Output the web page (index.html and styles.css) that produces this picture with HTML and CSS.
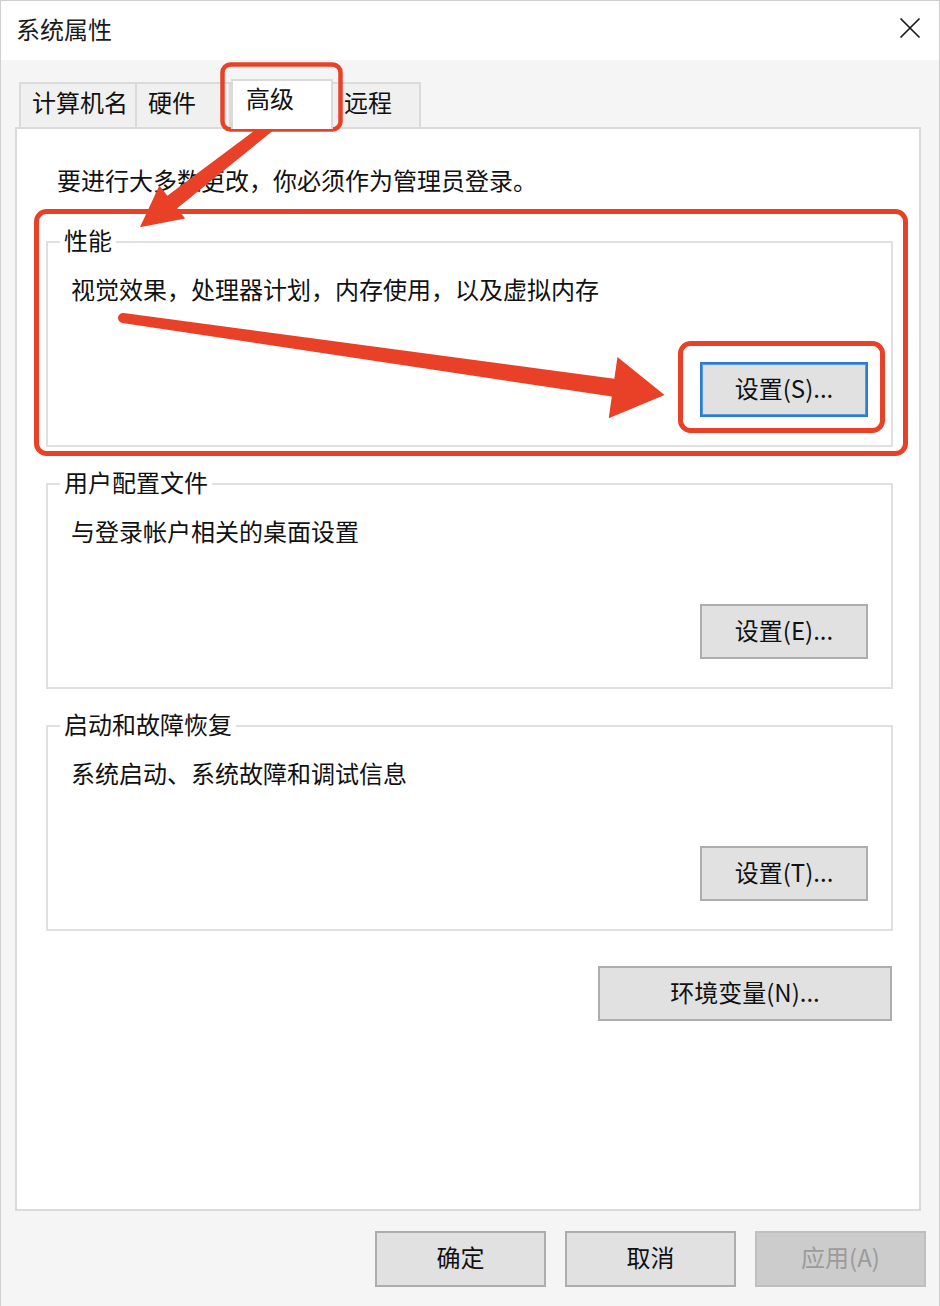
FILE: index.html
```html
<!DOCTYPE html>
<html lang="zh-CN">
<head>
<meta charset="utf-8">
<title>系统属性</title>
<link rel="stylesheet" href="styles.css">
</head>
<body>
<div class="window">
  <div class="titlebar">
    <span class="title">系统属性</span>
    <svg class="close" width="22" height="22" viewBox="0 0 22 22">
      <path d="M1.5 1.5 L20.5 20.5 M20.5 1.5 L1.5 20.5" stroke="#1a1a1a" stroke-width="1.7" fill="none"/>
    </svg>
  </div>
  <div class="tabs">
    <div class="tab tab-name">计算机名</div>
    <div class="tab tab-hw">硬件</div>
    <div class="tab tab-adv selected">高级</div>
    <div class="tab tab-remote">远程</div>
  </div>
  <div class="panel">
    <div class="intro">要进行大多数更改，你必须作为管理员登录。</div>
    <div class="group group-first">
      <span class="legend">性能</span>
      <div class="desc">视觉效果，处理器计划，内存使用，以及虚拟内存</div>
      <div class="group-actions">
        <div class="btn focused">设置(S)...</div>
      </div>
    </div>
    <div class="group">
      <span class="legend">用户配置文件</span>
      <div class="desc">与登录帐户相关的桌面设置</div>
      <div class="group-actions">
        <div class="btn">设置(E)...</div>
      </div>
    </div>
    <div class="group">
      <span class="legend">启动和故障恢复</span>
      <div class="desc">系统启动、系统故障和调试信息</div>
      <div class="group-actions">
        <div class="btn">设置(T)...</div>
      </div>
    </div>
    <div class="btn btn-env">环境变量(N)...</div>
  </div>
  <div class="footer">
    <div class="btn btn-foot">确定</div>
    <div class="btn btn-foot">取消</div>
    <div class="btn btn-foot disabled">应用(A)</div>
  </div>
</div>
<svg class="annotations" width="940" height="1306" viewBox="0 0 940 1306">
  <g fill="none" stroke="#e94128">
    <rect x="222.5" y="64.5" width="118" height="65" rx="8" stroke-width="4.5"/>
    <rect x="36.5" y="211.5" width="869" height="242" rx="10" stroke-width="5"/>
    <rect x="680.5" y="343.5" width="202" height="87" rx="10" stroke-width="5"/>
  </g>
  <g fill="#e94128">
    <path transform="translate(293 108) rotate(142.1)" d="M0,-5 L153,-8 L153,-21 L194,0 L153,21 L153,8 L0,5 A5,5 0 0 1 0,-5 Z"/>
    <path transform="translate(123 318) rotate(8.09)" d="M0,-5 L495,-9 L495,-31 L547,0 L495,31 L495,9 L0,5 A5,5 0 0 1 0,-5 Z"/>
  </g>
</svg>
</body>
</html>
```

FILE: styles.css
```css
html, body {
  margin: 0;
  padding: 0;
}
body {
  position: relative;
  width: 940px;
  height: 1306px;
  overflow: hidden;
  font-family: "Noto Sans CJK SC", "Noto Sans", sans-serif;
  font-size: 24px;
  line-height: 30px;
  color: #111;
}
.window {
  width: 940px;
  height: 1306px;
  box-sizing: border-box;
  border: 1px solid #cfcfcf;
  border-bottom: none;
  background: #f5f5f5;
}
.titlebar {
  box-sizing: border-box;
  height: 59px;
  background: #fff;
  display: flex;
  align-items: center;
  justify-content: space-between;
  padding: 0 18px 4px 15px;
}
.title {
  color: #1a1a1a;
}
.close {
  display: block;
  align-self: flex-start;
  margin-top: 16px;
}
.tabs {
  display: flex;
  align-items: flex-end;
  height: 48px;
  margin-top: 19px;
  padding-left: 18px;
}
.tab {
  box-sizing: border-box;
  height: 45px;
  border: 2px solid #dadada;
  border-bottom: none;
  background: #f0f0f0;
  padding: 3px 0 0 11px;
  color: #111;
}
.tab-name { width: 118px; }
.tab-hw { width: 96px; margin-left: -2px; }
.tab-adv { width: 102px; }
.tab-remote { width: 90px; margin-left: -2px; }
.tab.selected {
  position: relative;
  z-index: 1;
  height: 50px;
  margin-bottom: -2px;
  background: #fff;
  padding: 2px 0 0 13px;
}
.panel {
  box-sizing: border-box;
  margin-left: 14px;
  width: 906px;
  height: 1084px;
  border: 2px solid #dadada;
  background: #fff;
  padding: 0 26px 0 29px;
  display: flex;
  flex-direction: column;
}
.intro {
  margin: 36px 0 0 11px;
}
.group {
  border: 2px solid #e0e0e0;
  margin-top: 36px;
}
.group-first {
  margin-top: 46px;
}
.legend {
  display: block;
  width: fit-content;
  background: #fff;
  padding: 0 4px;
  margin: -18px 0 0 12px;
}
.desc {
  margin-top: 19px;
  padding-left: 23px;
}
.group-actions {
  display: flex;
  justify-content: flex-end;
  margin-top: 58px;
  padding: 0 23px 28px 0;
}
.btn {
  box-sizing: border-box;
  width: 168px;
  height: 55px;
  border: 2px solid #adadad;
  background: #e1e1e1;
  display: flex;
  align-items: center;
  justify-content: center;
  padding-bottom: 4px;
  color: #111;
}
.btn.focused {
  border-color: #2b7bd6;
  box-shadow: inset 0 0 0 1px #5a9ae0;
}
.btn-env {
  width: 294px;
  align-self: flex-end;
  margin: 35px 1px 0 0;
}
.footer {
  display: flex;
  justify-content: flex-end;
  gap: 19px;
  margin-top: 20px;
  padding-right: 13px;
}
.btn-foot {
  width: 171px;
  height: 56px;
}
.btn.disabled {
  background: #cccccc;
  border-color: #bfbfbf;
  color: #9b9b9b;
}
.annotations {
  position: absolute;
  top: 0;
  left: 0;
  pointer-events: none;
}
```
